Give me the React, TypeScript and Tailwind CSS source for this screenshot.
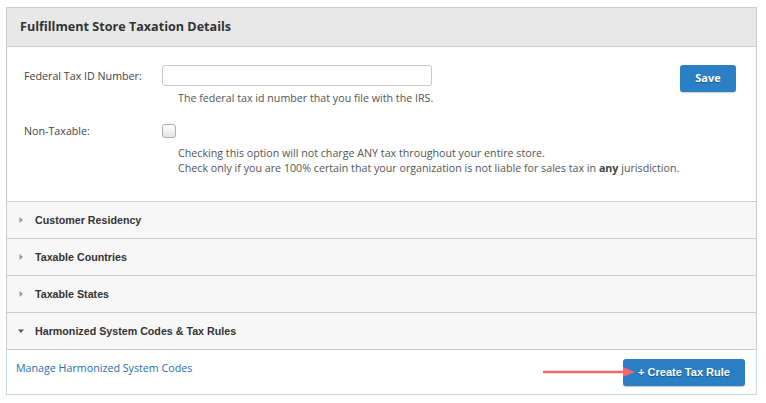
import React from 'react';

const rows = ['Customer Residency', 'Taxable Countries', 'Taxable States'];

function Caret({ open }: { open?: boolean }) {
  return (
    <svg width="8" height="8" viewBox="0 0 8 8" className="shrink-0">
      {open ? (
        <polygon points="1,2.5 7,2.5 4,6" fill="#555" />
      ) : (
        <polygon points="2.5,1 6,4 2.5,7" fill="#999" />
      )}
    </svg>
  );
}

export default function App() {
  return (
    <div className="w-[766px] h-[403px] bg-white pt-[7px] pl-[6px]" style={{ fontFamily: '"Open Sans", sans-serif' }}>
      <div className="w-[751px]">
        <div className="border-t border-x border-[#cccccc]">
          {/* header */}
          <div className="h-[39px] bg-[#e8e8e8] border-b border-[#cccccc] flex items-center pl-[13px]">
            <h2 className="text-[12.6px] font-bold text-[#333]">Fulfillment Store Taxation Details</h2>
          </div>

          {/* form */}
          <div className="h-[154px] flex justify-between pl-[17px] pr-[20px] pt-[18px]">
            <div className="text-[10.7px] text-[#444]">
              <div className="flex items-start">
                <label className="w-[138px] shrink-0 leading-[20px] pt-[1px]">Federal Tax ID Number:</label>
                <div>
                  <input className="block w-[270px] h-[21px] border border-[#c8c8c8] rounded-[3px] bg-white" />
                  <p className="ml-[16px] mt-[5px] leading-[15px] text-[#555]">The federal tax id number that you file with the IRS.</p>
                </div>
              </div>
              <div className="flex items-start mt-[18px]">
                <label className="w-[138px] shrink-0 leading-[15px]">Non-Taxable:</label>
                <div>
                  <div className="w-[14px] h-[14px] border border-[#b0b0b0] rounded-[3px] bg-gradient-to-b from-white to-[#e4e4e4]" />
                  <p className="ml-[16px] mt-[8px] leading-[15px] text-[#555] whitespace-nowrap">
                    Checking this option will not charge ANY tax throughout your entire store.
                    <br />
                    Check only if you are 100% certain that your organization is not liable for sales tax in{' '}
                    <b className="font-bold text-[#444]">any</b> jurisdiction.
                  </p>
                </div>
              </div>
            </div>
            <button className="self-start shrink-0 w-[56px] h-[27px] bg-[#2b80c5] rounded-[3px] text-white text-[11px] font-bold [text-shadow:0_1px_1px_rgba(0,0,0,0.35)] shadow-[0_1px_1px_rgba(0,0,0,0.2)]">
              Save
            </button>
          </div>

          {/* accordion */}
          <div style={{ fontFamily: '"Liberation Sans", Arial, sans-serif' }}>
            {rows.map((r) => (
              <div key={r} className="h-[37px] border-t border-[#cccccc] bg-[#f7f7f7] flex items-center pl-[10px] gap-[10px]">
                <Caret />
                <span className="text-[10.7px] font-bold text-[#333]">{r}</span>
              </div>
            ))}
            <div className="h-[38px] border-t border-b border-[#cccccc] bg-[#f7f7f7] flex items-center pl-[10px] gap-[10px]">
              <Caret open />
              <span className="text-[10.7px] font-bold text-[#333]">Harmonized System Codes &amp; Tax Rules</span>
            </div>
          </div>
        </div>

        {/* body */}
        <div className="h-[45px] border-x border-b border-[#c6d7e8] flex items-center justify-between pl-[9px] pr-[11px]">
          <a className="text-[10.7px] text-[#2a6db0] -mt-[7px]">Manage Harmonized System Codes</a>
          <div className="flex items-center">
            <svg width="92" height="10" viewBox="0 0 92 10" className="-mr-[12px] relative z-10">
              <line x1="0" y1="5" x2="82" y2="5" stroke="#f26b6b" strokeWidth="2.5" />
              <polygon points="80,0 92,5 80,10" fill="#f26b6b" />
            </svg>
            <button
              className="w-[122px] h-[27px] bg-[#2b80c5] rounded-[3px] text-white text-[11px] font-bold [text-shadow:0_1px_1px_rgba(0,0,0,0.4)] shadow-[0_1px_1px_rgba(0,0,0,0.25)]"
              style={{ fontFamily: '"Liberation Sans", Arial, sans-serif' }}
            >
              + Create Tax Rule
            </button>
          </div>
        </div>
      </div>
    </div>
  );
}
